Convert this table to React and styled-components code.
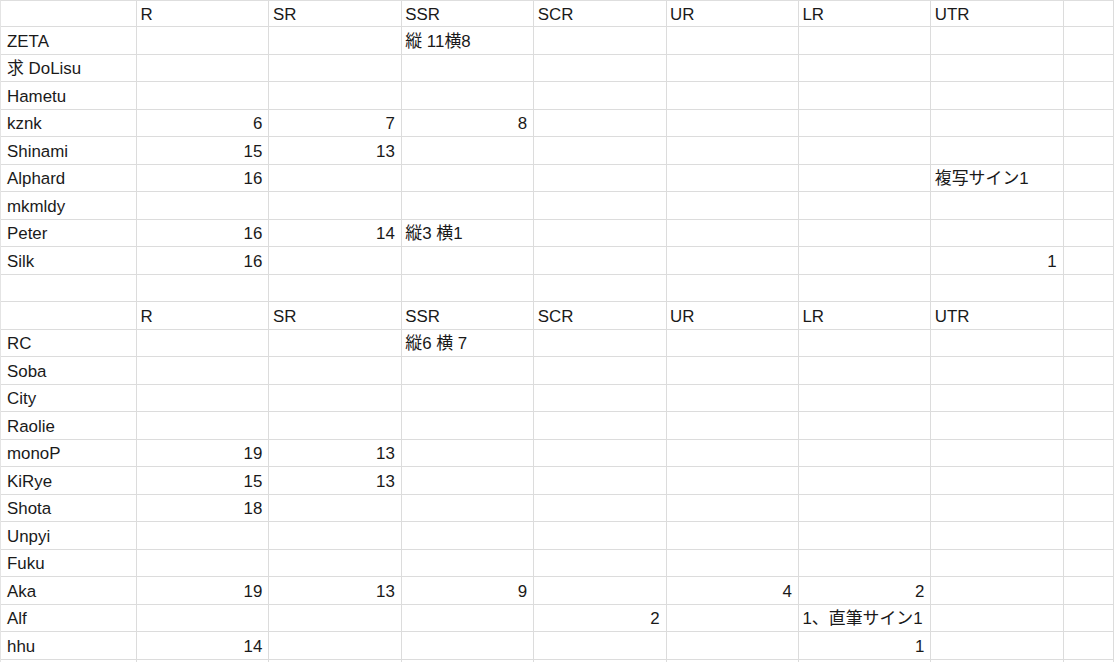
import React from "react";
import styled, { createGlobalStyle } from "styled-components";

const Global = createGlobalStyle`
  html, body { margin: 0; padding: 0; background: #ffffff; overflow: hidden; }
  body { font-family: "Liberation Sans", Arial, "Noto Sans CJK JP", sans-serif; }
`;

const Sheet = styled.div`
  display: grid;
  grid-template-columns: 136px repeat(7, 132.4px) 1fr;
  grid-template-rows: 26px repeat(24, 27.5px);
  width: 1114px;
  height: 662px;
  overflow: hidden;
  box-sizing: border-box;
  border-top: 1px solid #dedede;
  border-left: 1px solid #e4e4e4;
  background: #fff;
`;

const Cell = styled.div`
  box-sizing: border-box;
  border-right: 1px solid #dcdcdc;
  border-bottom: 1px solid #dcdcdc;
  display: flex;
  align-items: center;
  justify-content: ${(p) => (p.$align === "right" ? "flex-end" : "flex-start")};
  padding: 3px ${(p) => (p.$align === "right" ? "6px" : "0")} 0
    ${(p) => (p.$first ? "6px" : "3.5px")};
  font-family: "Liberation Sans", Arial, "Noto Sans CJK JP", sans-serif;
  font-size: 16.9px;
  color: #1a1a1a;
  white-space: nowrap;
  overflow: visible;
  line-height: 20px;
`;

const header = ["", "R", "SR", "SSR", "SCR", "UR", "LR", "UTR", ""];

const rows = [
  header,
  ["ZETA", "", "", "縦 11横8"],
  ["求 DoLisu"],
  ["Hametu"],
  ["kznk", 6, 7, 8],
  ["Shinami", 15, 13],
  ["Alphard", 16, "", "", "", "", "", "複写サイン1"],
  ["mkmldy"],
  ["Peter", 16, 14, "縦3 横1"],
  ["Silk", 16, "", "", "", "", "", 1],
  [],
  header,
  ["RC", "", "", "縦6 横 7"],
  ["Soba"],
  ["City"],
  ["Raolie"],
  ["monoP", 19, 13],
  ["KiRye", 15, 13],
  ["Shota", 18],
  ["Unpyi"],
  ["Fuku"],
  ["Aka", 19, 13, 9, "", 4, 2],
  ["Alf", "", "", "", 2, "", "1、直筆サイン1"],
  ["hhu", 14, "", "", "", "", 1],
  [],
];

export default function App() {
  return (
    <>
      <Global />
      <Sheet>
        {rows.map((row, r) =>
          Array.from({ length: 9 }).map((_, c) => {
            const v = row[c];
            const isNum = typeof v === "number";
            return (
              <Cell key={`${r}-${c}`} $align={isNum ? "right" : "left"} $first={c === 0}>
                {v === undefined ? "" : v}
              </Cell>
            );
          })
        )}
      </Sheet>
    </>
  );
}
